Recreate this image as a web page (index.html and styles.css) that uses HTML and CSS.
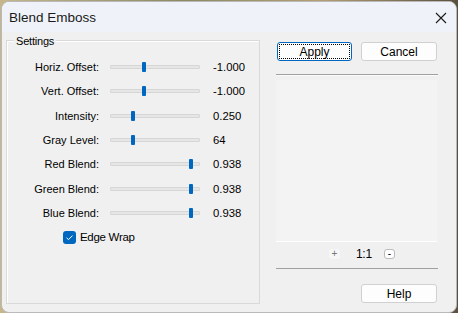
FILE: index.html
```html
<!DOCTYPE html>
<html>
<head>
<meta charset="utf-8">
<link rel="stylesheet" href="styles.css">
</head>
<body>
<div class="window">
  <div class="titlebar">
    <span class="title">Blend Emboss</span>
    <svg class="close" width="12" height="12" viewBox="0 0 12 12"><path d="M1 1 L11 11 M11 1 L1 11" stroke="#1a1a1a" stroke-width="1.1" fill="none"/></svg>
  </div>
  <div class="content">
    <div class="group">
      <span class="legend">Settings</span>
      <div class="rows">
        <div class="row"><span class="lbl">Horiz. Offset:</span><div class="slider"><div class="track"></div><div class="thumb" style="left:32px"></div></div><span class="val">-1.000</span></div>
        <div class="row"><span class="lbl">Vert. Offset:</span><div class="slider"><div class="track"></div><div class="thumb" style="left:32px"></div></div><span class="val">-1.000</span></div>
        <div class="row"><span class="lbl">Intensity:</span><div class="slider"><div class="track"></div><div class="thumb" style="left:21px"></div></div><span class="val">0.250</span></div>
        <div class="row"><span class="lbl">Gray Level:</span><div class="slider"><div class="track"></div><div class="thumb" style="left:21px"></div></div><span class="val">64</span></div>
        <div class="row"><span class="lbl">Red Blend:</span><div class="slider"><div class="track"></div><div class="thumb" style="left:79px"></div></div><span class="val">0.938</span></div>
        <div class="row"><span class="lbl">Green Blend:</span><div class="slider"><div class="track"></div><div class="thumb" style="left:79px"></div></div><span class="val">0.938</span></div>
        <div class="row"><span class="lbl">Blue Blend:</span><div class="slider"><div class="track"></div><div class="thumb" style="left:79px"></div></div><span class="val">0.938</span></div>
        <div class="checkrow">
          <span class="check"><svg width="13" height="13" viewBox="0 0 13 13"><path d="M3.5 6.8 L5.5 8.6 L9.5 4.6" stroke="#fff" stroke-width="1" fill="none"/></svg></span>
          <span class="checklbl">Edge Wrap</span>
        </div>
      </div>
    </div>
    <div class="side">
      <div class="btnrow">
        <button class="btn default"><span class="focus">Apply</span></button>
        <button class="btn wide">Cancel</button>
      </div>
      <div class="sep"></div>
      <div class="preview"></div>
      <div class="zoomrow">
        <span class="zbtn plus">+</span>
        <span class="ratio">1:1</span>
        <span class="zbtn minus">-</span>
      </div>
      <div class="sep2"></div>
      <div class="helprow">
        <button class="btn wide">Help</button>
      </div>
    </div>
  </div>
</div>
</body>
</html>
```
FILE: styles.css
```css
html, body {
  margin: 0;
  padding: 0;
}
body {
  width: 458px;
  height: 313px;
  background: linear-gradient(90deg, #c6b68c 0%, #8a8a62 40%, #b59f72 70%, #5a5040 100%);
  overflow: hidden;
  font-family: "Liberation Sans", Arial, sans-serif;
}
.window {
  margin: 1px 0 0 1px;
  width: 454px;
  height: 310px;
  border: 1px solid #b9b9b9;
  border-radius: 8px;
  overflow: hidden;
  background: #f0f0f0;
  display: flex;
  flex-direction: column;
}
.titlebar {
  height: 30px;
  flex: none;
  background: #eff3f9;
  display: flex;
  align-items: center;
  padding: 0 0 0 7px;
}
.title {
  font-size: 13.5px;
  color: #1a1a1a;
  flex: 1;
  padding-top: 1px;
}
.close {
  margin-right: 9px;
  margin-top: 1px;
}
.content {
  flex: 1;
  display: flex;
  padding: 0 0 0 4px;
  font-size: 11px;
  color: #000;
}
.group {
  margin-top: 8px;
  width: 252px;
  height: 262px;
  border: 1px solid #d9d9d9;
  box-shadow: inset 1px 1px 0 #fff;
  display: flex;
  flex-direction: column;
  flex: none;
}
.legend {
  align-self: flex-start;
  margin: -6px 0 0 7px;
  padding: 0 2px;
  background: #f0f0f0;
  line-height: 12px;
  font-size: 11px;
  letter-spacing: -0.2px;
}
.rows {
  padding-top: 8px;
  display: flex;
  flex-direction: column;
}
.row {
  height: 24.33px;
  display: flex;
  align-items: center;
}
.lbl {
  width: 92px;
  text-align: right;
  flex: none;
}
.slider {
  position: relative;
  width: 90px;
  height: 10px;
  margin-left: 11px;
  flex: none;
}
.track {
  position: absolute;
  left: 0;
  right: 0;
  top: 3px;
  background: #e6e6e6;
  border: 1px solid #d6d6d6;
  border-radius: 1px;
  box-sizing: border-box;
  height: 4px;
}
.thumb {
  position: absolute;
  top: 0;
  width: 4px;
  height: 10px;
  background: #0067c0;
  border-radius: 1px;
}
.val {
  margin-left: 13px;
  font-size: 11.3px;
}
.checkrow {
  height: 24px;
  display: flex;
  align-items: center;
  padding-left: 56px;
}
.check {
  width: 13px;
  height: 13px;
  border-radius: 3px;
  background: #0067c0;
  display: block;
}
.check svg { display: block; }
.checklbl {
  margin-left: 4px;
  font-size: 11.5px;
  letter-spacing: -0.3px;
}
.side {
  margin-left: 16px;
  width: 162px;
  display: flex;
  flex-direction: column;
}
.btnrow {
  display: flex;
  margin-top: 10px;
  padding-left: 1px;
  gap: 9px;
}
.btn {
  width: 75px;
  height: 19px;
  margin: 0;
  padding: 0;
  background: #fdfdfd;
  border: 1px solid #d0d0d0;
  border-radius: 3px;
  font-family: "Liberation Sans", Arial, sans-serif;
  font-size: 12px;
  color: #000;
  display: flex;
  align-items: center;
  justify-content: center;
  box-sizing: border-box;
}
.btn.wide { width: 76px; }
.btn.default {
  border: 1px solid #0067c0;
  padding: 1px;
}
.focus {
  flex: 1;
  align-self: stretch;
  border: 1px dotted #000;
  display: flex;
  align-items: center;
  justify-content: center;
}
.sep {
  margin-top: 13px;
  height: 0;
  border-top: 1px solid #a0a0a0;
  border-bottom: 1px solid #fafafa;
}
.preview {
  margin-top: 4px;
  height: 161px;
  background: #f3f3f3;
  border-bottom: 1px solid #ffffff;
  margin-right: 1px;
}
.zoomrow {
  height: 24px;
  display: flex;
  align-items: center;
  padding-left: 53px;
}
.zbtn {
  width: 11px;
  height: 10px;
  border-radius: 3px;
  font-size: 10px;
  line-height: 10px;
  text-align: center;
  box-sizing: border-box;
}
.plus {
  background: #f7f7f7;
  color: #777;
}
.minus {
  background: #fff;
  border: 1px solid #bbb;
  color: #000;
  line-height: 7px;
}
.ratio {
  margin: 0 12px 0 16px;
  font-size: 12px;
  letter-spacing: -0.3px;
}
.sep2 {
  height: 0;
  border-top: 1px solid #a0a0a0;
  margin-top: 2px;
}
.helprow {
  display: flex;
  padding-left: 85px;
  margin-top: 15px;
}
```
